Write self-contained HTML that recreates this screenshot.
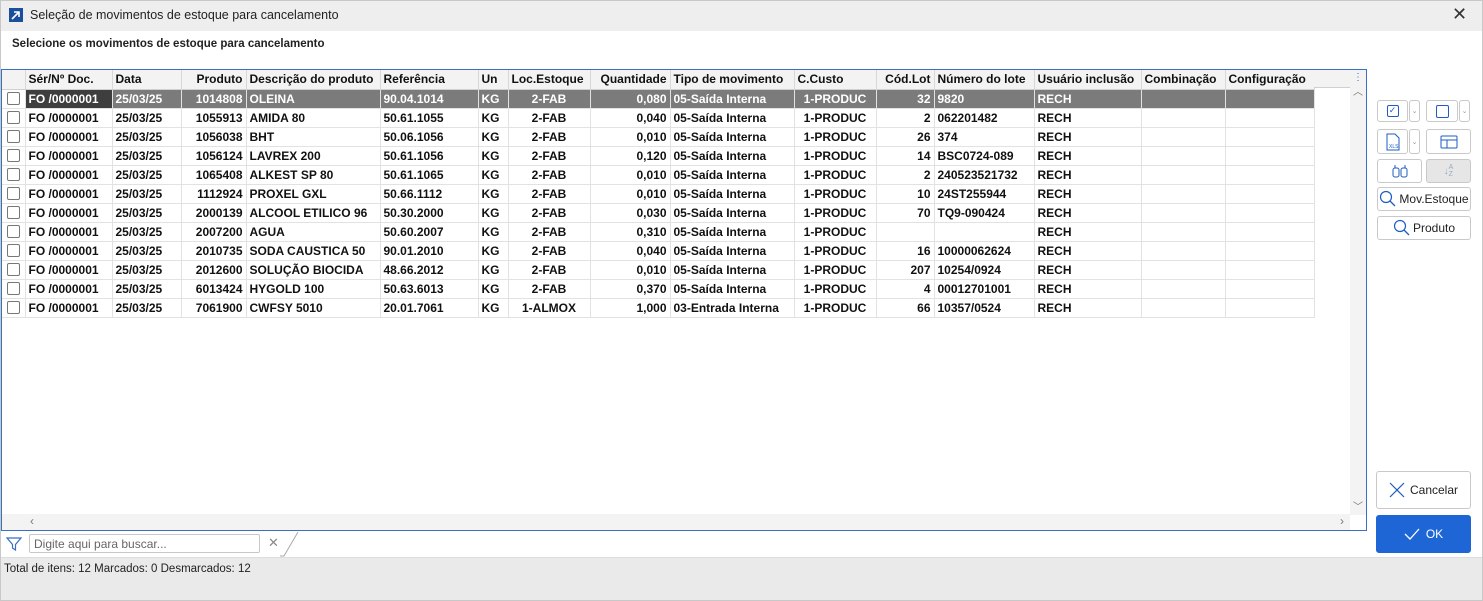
<!DOCTYPE html>
<html><head><meta charset="utf-8"><style>
*{box-sizing:border-box;margin:0;padding:0}
body{width:1483px;height:601px;overflow:hidden;background:#fff;font-family:"Liberation Sans",sans-serif;position:relative}
.abs{position:absolute}
#frame{left:0;top:0;width:1483px;height:601px;border:1px solid #c8c8c8;pointer-events:none;z-index:5}
#title{left:0;top:0;width:1483px;height:31px;background:#eeeeee;font-size:12.5px;color:#222}
#grid{left:1px;top:69px;width:1366px;height:462px;border:1px solid #3a6fc4;background:#fff;overflow:hidden}
table{border-collapse:collapse;table-layout:fixed;font-size:12px;font-weight:bold;position:absolute;left:0;top:0}
td,th{height:19px;border-right:1px solid #e2e2e2;border-bottom:1px solid #e2e2e2;padding:0 3px;white-space:nowrap;overflow:hidden;color:#111}
th{background:#f3f3f3;text-align:left;font-weight:bold;border-right:1px solid #d8d8d8;border-bottom:1px solid #d0d0d0}
.r{text-align:right}.c{text-align:center}
tr.sel td{background:#7b7b7b;color:#fff}
tr.sel td.f{background:#3e3e3e}
tr.sel td.cb{background:#fff}
.box{width:13px;height:13px;border:1px solid #777;border-radius:2px;background:#fff;margin:0 auto}
.btn{position:absolute;border:1px solid #c9c9c9;border-radius:3px;background:#fff;font-size:12px;color:#222;display:flex;align-items:center;justify-content:center}
</style></head><body>
<div id="frame" class="abs"></div>
<div id="title" class="abs">
 <div class="abs" style="left:9px;top:8px;width:14px;height:14px;background:#1a4f9c"><svg width="14" height="14"><path d="M3 11 L10 4 M5 4 H10 V9" stroke="#fff" stroke-width="1.6" fill="none"/></svg></div>
 <div class="abs" style="left:30px;top:8px">Seleção de movimentos de estoque para cancelamento</div>
 <div class="abs" style="left:1452px;top:4px;font-size:18px;color:#333">✕</div>
</div>
<div class="abs" style="left:12px;top:38px;font-size:11.5px;font-weight:bold;color:#222">Selecione os movimentos de estoque para cancelamento</div>
<div id="grid" class="abs">
<table>
<colgroup><col style="width:23px"><col style="width:87px"><col style="width:69px"><col style="width:65px"><col style="width:134px"><col style="width:98px"><col style="width:30px"><col style="width:82px"><col style="width:80px"><col style="width:124px"><col style="width:82px"><col style="width:58px"><col style="width:100px"><col style="width:107px"><col style="width:84px"><col style="width:89px"></colgroup>
<tr><th></th><th>Sér/Nº Doc.</th><th>Data</th><th class="r">Produto</th><th>Descrição do produto</th><th>Referência</th><th>Un</th><th>Loc.Estoque</th><th class="r">Quantidade</th><th>Tipo de movimento</th><th>C.Custo</th><th class="r">Cód.Lot</th><th>Número do lote</th><th>Usuário inclusão</th><th>Combinação</th><th>Configuração</th></tr>
<tr class="sel"><td class="cb"><div class="box"></div></td><td class="f">FO /0000001</td><td>25/03/25</td><td class="r">1014808</td><td>OLEINA</td><td>90.04.1014</td><td>KG</td><td class="c">2-FAB</td><td class="r">0,080</td><td>05-Saída Interna</td><td class="c">1-PRODUC</td><td class="r">32</td><td>9820</td><td>RECH</td><td></td><td></td></tr>
<tr><td><div class="box"></div></td><td>FO /0000001</td><td>25/03/25</td><td class="r">1055913</td><td>AMIDA 80</td><td>50.61.1055</td><td>KG</td><td class="c">2-FAB</td><td class="r">0,040</td><td>05-Saída Interna</td><td class="c">1-PRODUC</td><td class="r">2</td><td>062201482</td><td>RECH</td><td></td><td></td></tr>
<tr><td><div class="box"></div></td><td>FO /0000001</td><td>25/03/25</td><td class="r">1056038</td><td>BHT</td><td>50.06.1056</td><td>KG</td><td class="c">2-FAB</td><td class="r">0,010</td><td>05-Saída Interna</td><td class="c">1-PRODUC</td><td class="r">26</td><td>374</td><td>RECH</td><td></td><td></td></tr>
<tr><td><div class="box"></div></td><td>FO /0000001</td><td>25/03/25</td><td class="r">1056124</td><td>LAVREX 200</td><td>50.61.1056</td><td>KG</td><td class="c">2-FAB</td><td class="r">0,120</td><td>05-Saída Interna</td><td class="c">1-PRODUC</td><td class="r">14</td><td>BSC0724-089</td><td>RECH</td><td></td><td></td></tr>
<tr><td><div class="box"></div></td><td>FO /0000001</td><td>25/03/25</td><td class="r">1065408</td><td>ALKEST SP 80</td><td>50.61.1065</td><td>KG</td><td class="c">2-FAB</td><td class="r">0,010</td><td>05-Saída Interna</td><td class="c">1-PRODUC</td><td class="r">2</td><td>240523521732</td><td>RECH</td><td></td><td></td></tr>
<tr><td><div class="box"></div></td><td>FO /0000001</td><td>25/03/25</td><td class="r">1112924</td><td>PROXEL GXL</td><td>50.66.1112</td><td>KG</td><td class="c">2-FAB</td><td class="r">0,010</td><td>05-Saída Interna</td><td class="c">1-PRODUC</td><td class="r">10</td><td>24ST255944</td><td>RECH</td><td></td><td></td></tr>
<tr><td><div class="box"></div></td><td>FO /0000001</td><td>25/03/25</td><td class="r">2000139</td><td>ALCOOL ETILICO 96</td><td>50.30.2000</td><td>KG</td><td class="c">2-FAB</td><td class="r">0,030</td><td>05-Saída Interna</td><td class="c">1-PRODUC</td><td class="r">70</td><td>TQ9-090424</td><td>RECH</td><td></td><td></td></tr>
<tr><td><div class="box"></div></td><td>FO /0000001</td><td>25/03/25</td><td class="r">2007200</td><td>AGUA</td><td>50.60.2007</td><td>KG</td><td class="c">2-FAB</td><td class="r">0,310</td><td>05-Saída Interna</td><td class="c">1-PRODUC</td><td class="r"></td><td></td><td>RECH</td><td></td><td></td></tr>
<tr><td><div class="box"></div></td><td>FO /0000001</td><td>25/03/25</td><td class="r">2010735</td><td>SODA CAUSTICA 50</td><td>90.01.2010</td><td>KG</td><td class="c">2-FAB</td><td class="r">0,040</td><td>05-Saída Interna</td><td class="c">1-PRODUC</td><td class="r">16</td><td>10000062624</td><td>RECH</td><td></td><td></td></tr>
<tr><td><div class="box"></div></td><td>FO /0000001</td><td>25/03/25</td><td class="r">2012600</td><td>SOLUÇÃO BIOCIDA</td><td>48.66.2012</td><td>KG</td><td class="c">2-FAB</td><td class="r">0,010</td><td>05-Saída Interna</td><td class="c">1-PRODUC</td><td class="r">207</td><td>10254/0924</td><td>RECH</td><td></td><td></td></tr>
<tr><td><div class="box"></div></td><td>FO /0000001</td><td>25/03/25</td><td class="r">6013424</td><td>HYGOLD 100</td><td>50.63.6013</td><td>KG</td><td class="c">2-FAB</td><td class="r">0,370</td><td>05-Saída Interna</td><td class="c">1-PRODUC</td><td class="r">4</td><td>00012701001</td><td>RECH</td><td></td><td></td></tr>
<tr><td><div class="box"></div></td><td>FO /0000001</td><td>25/03/25</td><td class="r">7061900</td><td>CWFSY 5010</td><td>20.01.7061</td><td>KG</td><td class="c">1-ALMOX</td><td class="r">1,000</td><td>03-Entrada Interna</td><td class="c">1-PRODUC</td><td class="r">66</td><td>10357/0524</td><td>RECH</td><td></td><td></td></tr>
</table>
<div class="abs" style="left:1312px;top:0;width:36px;height:18px;background:#f3f3f3;border-bottom:1px solid #d0d0d0"></div>
<div class="abs" style="left:1348px;top:0;width:16px;height:445px;background:#f3f3f3;color:#777;font-size:10px;text-align:center">
 <div style="margin-top:2px;color:#3a6fc4">⋮</div><div style="margin-top:0">︿</div><div style="position:absolute;top:428px;width:16px">﹀</div></div>
<div class="abs" style="left:0;top:444px;width:1348px;height:16px;background:#f3f3f3;color:#777;font-size:12px"><span class="abs" style="left:28px;top:0">‹</span><span class="abs" style="left:1338px;top:0">›</span></div>
</div>
<div class="abs" style="left:0;top:531px;width:300px;height:26px">
 <svg class="abs" style="left:6px;top:5px" width="16" height="16"><path d="M1 2 H15 L9.5 8.5 V14 L6.5 12 V8.5 Z" fill="none" stroke="#3a6fc4" stroke-width="1.2"/></svg>
 <div class="abs" style="left:29px;top:3px;width:231px;height:19px;border:1px solid #c8c8c8;border-radius:2px;font-size:12px;color:#666;padding:2px 4px">Digite aqui para buscar...</div>
 <div class="abs" style="left:268px;top:4px;font-size:13px;color:#888">✕</div>
 <svg class="abs" style="left:280px;top:0" width="20" height="26"><path d="M0 25 H4 L18 1" stroke="#aaa" fill="none"/></svg>
</div>
<div class="abs" style="left:0;top:557px;width:1483px;height:44px;background:#eaeaea;border-top:1px solid #ddd"></div>
<div class="abs" style="left:4px;top:563px;font-size:11.5px;color:#222">Total de itens: 12 Marcados: 0 Desmarcados: 12</div>
<div class="btn" style="left:1377px;top:100px;width:31px;height:22px"><div style="width:12px;height:12px;border:1.3px solid #1d5cc4;border-radius:2px;font-size:9px;color:#1d5cc4;line-height:9px;text-align:center">✓</div></div>
<div class="btn" style="left:1409px;top:100px;width:11px;height:22px;font-size:7px;color:#999">⌄</div>
<div class="btn" style="left:1426px;top:100px;width:32px;height:22px"><div style="width:13px;height:13px;border:1.3px solid #1d5cc4;border-radius:2px"></div></div>
<div class="btn" style="left:1459px;top:100px;width:11px;height:22px;font-size:7px;color:#999">⌄</div>
<div class="btn" style="left:1377px;top:129px;width:31px;height:25px"><svg width="14" height="18"><path d="M1 1 H9 L13 5 V17 H1 Z" fill="none" stroke="#1d5cc4"/><text x="3" y="15" font-size="5" fill="#1d5cc4" font-family="Liberation Sans">XLS</text></svg></div>
<div class="btn" style="left:1409px;top:129px;width:11px;height:25px;font-size:7px;color:#999">⌄</div>
<div class="btn" style="left:1426px;top:129px;width:45px;height:25px"><svg width="18" height="14"><rect x="1" y="1" width="16" height="12" rx="1" fill="none" stroke="#1d5cc4"/><path d="M1 5 H17 M7 5 V13" stroke="#1d5cc4"/></svg></div>
<div class="btn" style="left:1377px;top:159px;width:45px;height:24px"><svg width="16" height="14"><rect x="1" y="4" width="6" height="9" rx="2" fill="none" stroke="#1d5cc4"/><rect x="9" y="4" width="6" height="9" rx="2" fill="none" stroke="#1d5cc4"/><path d="M3 4 V1 M13 4 V1" stroke="#1d5cc4"/></svg></div>
<div class="btn" style="left:1426px;top:159px;width:45px;height:24px;background:#e6e6e6;color:#9ab;font-size:10px">↓<span style="font-size:7px;line-height:7px">A<br>Z</span></div>
<div class="btn" style="left:1377px;top:187px;width:94px;height:24px"><svg width="18" height="18" style="margin-right:2px"><circle cx="7" cy="7" r="5.5" fill="none" stroke="#1d5cc4" stroke-width="1.2"/><path d="M11 11 L16 16" stroke="#1d5cc4" stroke-width="1.3"/></svg>Mov.Estoque</div>
<div class="btn" style="left:1377px;top:216px;width:94px;height:24px"><svg width="18" height="18" style="margin-right:2px"><circle cx="7" cy="7" r="5.5" fill="none" stroke="#1d5cc4" stroke-width="1.2"/><path d="M11 11 L16 16" stroke="#1d5cc4" stroke-width="1.3"/></svg>Produto</div>
<div class="btn" style="left:1376px;top:471px;width:95px;height:38px"><svg width="16" height="16" style="margin-right:5px"><path d="M1 1 L15 15 M15 1 L1 15" stroke="#1d5cc4" stroke-width="1.2"/></svg>Cancelar</div>
<div class="btn" style="left:1376px;top:515px;width:95px;height:38px;background:#1e66d6;border-color:#1e66d6;color:#fff"><svg width="16" height="12" style="margin-right:6px"><path d="M1 6 L6 11 L15 1" stroke="#fff" stroke-width="1.3" fill="none"/></svg>OK</div>
</body></html>
